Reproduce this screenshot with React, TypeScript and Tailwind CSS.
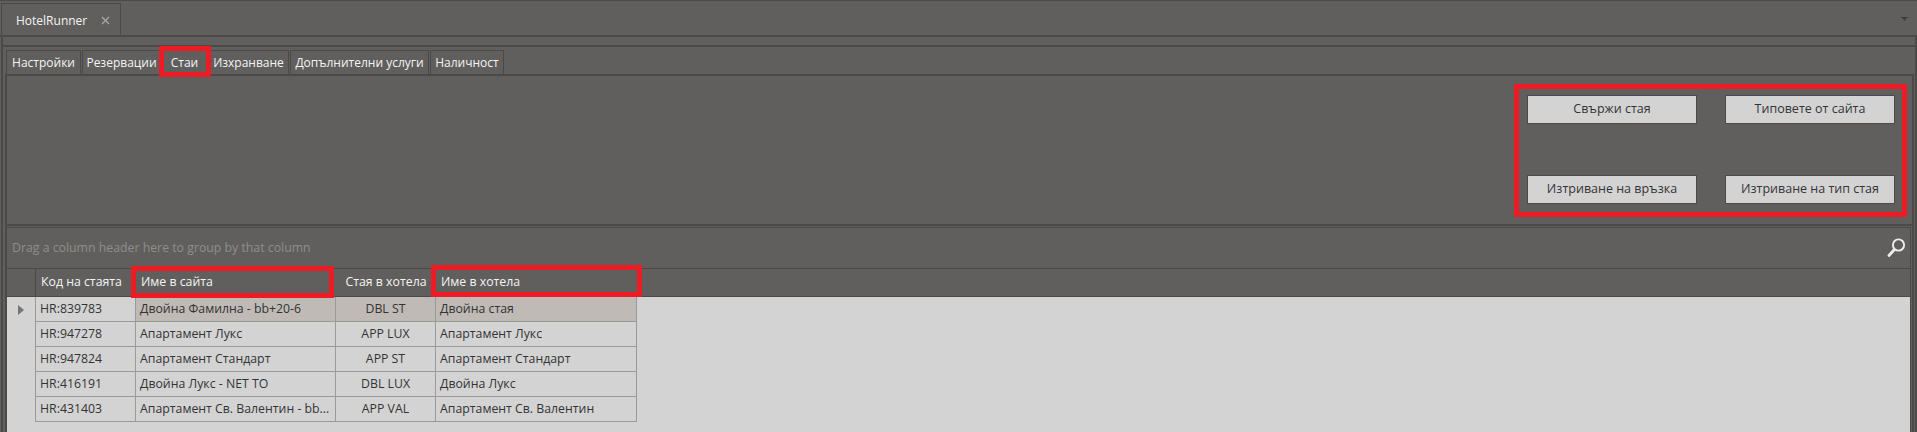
const font = { fontFamily: '"Open Sans", "Noto Sans", sans-serif' };

const tabs = [
  { label: "Настройки", w: "w-[75px]" },
  { label: "Резервации", w: "w-[79px]" },
  { label: "Стаи", w: "w-[45px]" },
  { label: "Изхранване", w: "w-[81px]" },
  { label: "Допълнителни услуги", w: "w-[139px]" },
  { label: "Наличност", w: "w-[74px]" },
];

const rows = [
  ["HR:839783", "Двойна Фамилна - bb+20-6", "DBL ST", "Двойна стая"],
  ["HR:947278", "Апартамент Лукс", "APP LUX", "Апартамент Лукс"],
  ["HR:947824", "Апартамент Стандарт", "APP ST", "Апартамент Стандарт"],
  ["HR:416191", "Двойна Лукс - NET TO", "DBL LUX", "Двойна Лукс"],
  ["HR:431403", "Апартамент Св. Валентин - bb...", "APP VAL", "Апартамент Св. Валентин"],
];

function Btn({ children }: { children: string }) {
  return (
    <button className="h-[29px] w-[170px] border border-[#4b4a48] bg-[#d3d3d3] text-[12.5px] text-[#343436]">
      {children}
    </button>
  );
}

export default function App() {
  return (
    <div className="relative flex h-[432px] w-[1917px] flex-col overflow-hidden bg-[#605f5d] text-[12px] leading-none text-[#f4f4f4]" style={font}>
      <div className="flex h-[37px] shrink-0 justify-between border-t border-b-2 border-[#4b4a48] pl-[1px]">
        <div className="mt-[2px] flex h-[32px] w-[120px] items-center gap-[14px] border-t border-r border-l border-[#4b4a48] pt-[2px] pl-[14px]">
          <span>HotelRunner</span>
          <svg width="9" height="9" viewBox="0 0 9 9" className="text-[#a9a8a5]">
            <path d="M1 1l7 7M8 1L1 8" stroke="currentColor" strokeWidth="1.3" />
          </svg>
        </div>
        <svg width="7" height="4" viewBox="0 0 7 4" className="mt-[16px] mr-[9px] text-[#3c3b39]">
          <path d="M0 0h7v1H5.5L3.5 4 1.5 1H0z" fill="currentColor" />
        </svg>
      </div>

      <div className="ml-[1px] flex min-h-0 flex-1 flex-col border-r-2 border-l-2 border-[#4b4a48]">
        <div className="h-[10px] shrink-0 border-b-2 border-[#4b4a48]" />

        <div className="flex h-[27px] shrink-0 items-end gap-px pl-[3px]">
          {tabs.map((t) => (
            <div key={t.label} className={`${t.w} flex h-[24px] items-center justify-center border border-b-0 border-[#4b4a48] whitespace-nowrap`}>
              {t.label}
            </div>
          ))}
        </div>

        <div className="mr-[1px] ml-[2px] flex min-h-0 flex-1 flex-col border-t-2 border-r-2 border-l-2 border-[#4b4a48]">
          <div className="flex h-[150px] shrink-0 justify-end border-b-2 border-[#4b4a48]">
            <div className="mt-[19px] mr-[17px] grid h-[109px] grid-cols-[170px_170px] content-between gap-x-[28px]">
              <Btn>Свържи стая</Btn>
              <Btn>Типовете от сайта</Btn>
              <Btn>Изтриване на връзка</Btn>
              <Btn>Изтриване на тип стая</Btn>
            </div>
          </div>

          <div className="mt-px mr-px flex min-h-0 flex-1 flex-col border-t border-r border-[#4b4a48] text-[12.3px]">
            <div className="flex h-[41px] shrink-0 items-center justify-between border-b border-[#4b4a48] pr-[4px] pl-[5px]">
              <span className="text-[#8f8e8a]">Drag a column header here to group by that column</span>
              <svg width="19" height="20" viewBox="0 0 19 20" className="text-[#eeeeee]">
                <circle cx="11.5" cy="7" r="5.6" fill="none" stroke="currentColor" strokeWidth="1.9" />
                <path d="M7 12L2 17.5" stroke="currentColor" strokeWidth="2.8" strokeLinecap="round" />
              </svg>
            </div>

            <div className="grid h-[28px] shrink-0 grid-cols-[29px_100px_200px_100px_201px] border-b border-[#4b4a48]">
              <div className="border-r border-[#4b4a48]" />
              <div className="flex items-center pl-[5px] whitespace-nowrap">Код на стаята</div>
              <div className="flex items-center pl-[5px]">Име в сайта</div>
              <div className="flex items-center justify-center whitespace-nowrap">Стая в хотела</div>
              <div className="flex items-center pl-[5px]">Име в хотела</div>
            </div>

            <div className="flex-1 bg-[#d3d3d3] text-[#333333]">
              {rows.map((r, i) => (
                <div key={r[0]} className="grid h-[25px] grid-cols-[29px_100px_200px_100px_201px]">
                  <div className="flex items-center justify-center border-r border-[#9a9a98]">
                    {i === 0 && (
                      <svg width="6" height="10" viewBox="0 0 6 10" className="text-[#77756f]">
                        <path d="M0 0l6 5-6 5z" fill="currentColor" />
                      </svg>
                    )}
                  </div>
                  <div className="flex items-center border-r border-b border-[#9a9a98] pl-[4px]">{r[0]}</div>
                  <div className={`flex items-center border-r border-b border-[#9a9a98] pl-[4px] whitespace-nowrap ${i === 0 ? "bg-[#bfbab6]" : ""}`}>{r[1]}</div>
                  <div className={`flex items-center justify-center border-r border-b border-[#9a9a98] ${i === 0 ? "bg-[#bfbab6]" : ""}`}>{r[2]}</div>
                  <div className={`flex items-center border-r border-b border-[#9a9a98] pl-[4px] whitespace-nowrap ${i === 0 ? "bg-[#bfbab6]" : ""}`}>{r[3]}</div>
                </div>
              ))}
            </div>
          </div>
        </div>
      </div>

      <div className="absolute top-[46px] left-[159px] h-[31px] w-[52px] border-[5px] border-[#ed1c24]" />
      <div className="absolute top-[84px] left-[1514px] h-[133px] w-[393px] border-[5px] border-[#ed1c24]" />
      <div className="absolute top-[266px] left-[131px] h-[32px] w-[203px] border-[5px] border-[#ed1c24]" />
      <div className="absolute top-[265px] left-[431px] h-[32px] w-[211px] border-[5px] border-[#ed1c24]" />
    </div>
  );
}
